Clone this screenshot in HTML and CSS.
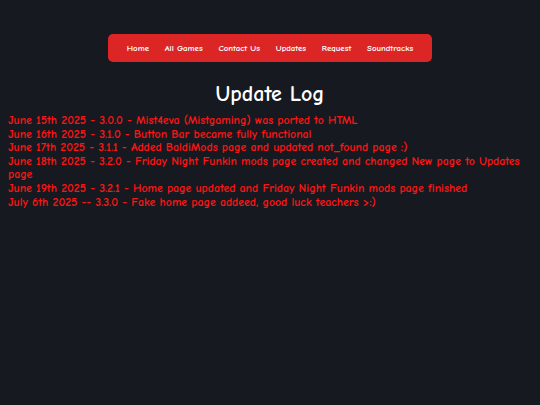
FILE: index.html
```html
<!DOCTYPE html>
<html>
<head>
<meta charset="utf-8">
<link rel="stylesheet" href="styles.css">
</head>
<body>
<nav class="bar">
  <a class="item" href="#">Home</a>
  <a class="item" href="#">All Games</a>
  <a class="item" href="#">Contact Us</a>
  <a class="item" href="#">Updates</a>
  <a class="item" href="#">Request</a>
  <a class="item" href="#">Soundtracks</a>
</nav>
<h1 class="title">Update Log</h1>
<div class="log">
  <p class="entry">June 15th 2025 - 3.0.0 - Mist4eva (Mistgaming) was ported to HTML</p>
  <p class="entry">June 16th 2025 - 3.1.0 - Button Bar became fully functional</p>
  <p class="entry">June 17th 2025 - 3.1.1 - Added BaldiMods page and updated not_found page :)</p>
  <p class="entry">June 18th 2025 - 3.2.0 - Friday Night Funkin mods page created and changed New page to Updates page</p>
  <p class="entry">June 19th 2025 - 3.2.1 - Home page updated and Friday Night Funkin mods page finished</p>
  <p class="entry">July 6th 2025 -- 3.3.0 - Fake home page addeed, good luck teachers &gt;:)</p>
</div>
</body>
</html>
```
FILE: styles.css
```css
html, body {
  margin: 0;
  padding: 0;
  background: #16191f;
  font-family: "Comic Sans MS", "Comic Neue", "Liberation Sans", sans-serif;
}
body {
  padding: 34px 8px 0 8px;
}
.bar {
  width: 324px;
  height: 28px;
  margin: 0 auto;
  background: #dc2626;
  border-radius: 5px;
  display: flex;
  justify-content: center;
  align-items: center;
  gap: 15.8px;
}
.item {
  color: #ffffff;
  text-decoration: none;
  font-weight: bold;
  font-size: 8.8px;
}
.title {
  margin: 18px 0 6px 0;
  text-align: center;
  color: #ffffff;
  font-size: 22px;
  font-weight: bold;
  line-height: 28px;
}
.log {
  color: #ff1414;
  font-weight: bold;
  font-size: 11.8px;
  line-height: 13.6px;
}
.entry {
  margin: 0;
}
```
